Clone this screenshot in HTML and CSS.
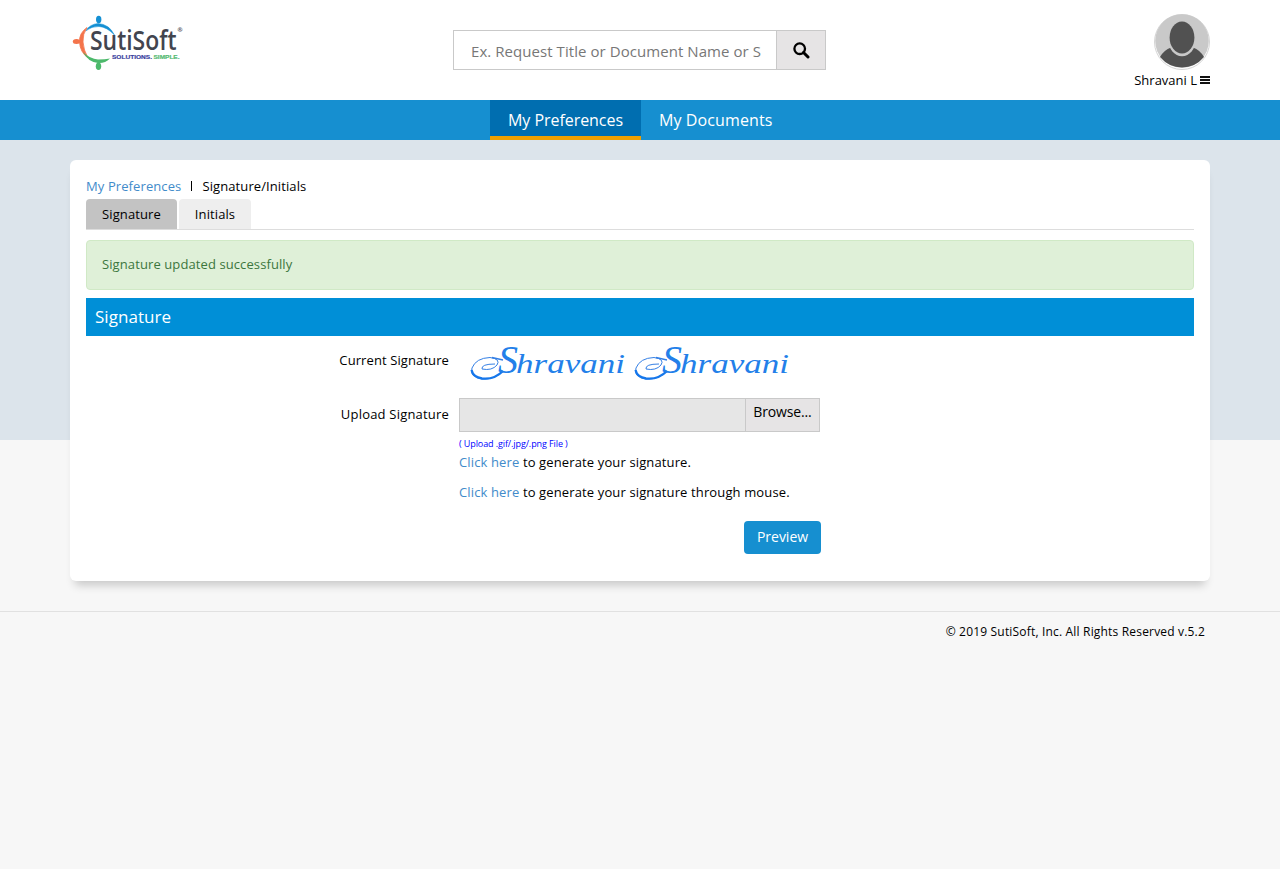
FILE: index.html
```html
<!DOCTYPE html>
<html lang="en">
<head>
<meta charset="utf-8">
<title>My Preferences - Signature</title>
<link rel="stylesheet" href="styles.css">
</head>
<body>
<header class="header container">
  <svg class="logo" viewBox="0 0 112 58" role="img" aria-label="SutiSoft">
    <ellipse cx="25.700" cy="5.500" rx="2.700" ry="3.700" fill="#1490d4"/>
    <path d="M12.500 17 Q17 10 25 9.500 Q36 10 41.500 21 Q34 13 26 12.500 Q19 12 12.500 17Z" fill="#1490d4" stroke="#1490d4" stroke-width=".5"/>
    <ellipse cx="3.500" cy="27.500" rx="3.700" ry="2.500" fill="#f4744b"/>
    <path d="M14 13.500 Q6 19 6.500 28 Q7 38 15 44 Q10.500 36 10 28 Q9.500 20 14 13.500Z" fill="#f4744b" stroke="#f4744b" stroke-width=".8"/>
    <ellipse cx="25.500" cy="52.200" rx="2.700" ry="3.800" fill="#4cb96b"/>
    <path d="M10 38 Q17 45 25 45.500 Q32 45.500 37 44.500 Q32 49.500 25 49 Q15 48 10 38Z" fill="#4cb96b"/>
    <text class="logo-name" x="17" y="35.500" textLength="86.500" lengthAdjust="spacingAndGlyphs">SutiSoft</text>
    <text class="logo-reg" x="104.500" y="17.500">®</text>
    <text class="logo-tag" x="39" y="44.500" fill="#3a3f9e" stroke="#3a3f9e" textLength="40" lengthAdjust="spacingAndGlyphs">SOLUTIONS.</text>
    <text class="logo-tag" x="80.500" y="44.500" fill="#55ba72" stroke="#55ba72" textLength="26" lengthAdjust="spacingAndGlyphs">SIMPLE.</text>
  </svg>
  <form class="search">
    <input class="search-input" type="text" aria-label="Search" placeholder="Ex. Request Title or Document Name or S">
    <button class="search-button" type="button" aria-label="Search">
      <svg width="17" height="17" viewBox="0 0 17 17"><circle cx="6.700" cy="6.700" r="5.300" fill="none" stroke="#000" stroke-width="2.300"/><path d="M10.500 10.500 15 15" stroke="#000" stroke-width="3" stroke-linecap="round"/></svg>
    </button>
  </form>
  <div class="user">
    <svg class="avatar" viewBox="0 0 56 56">
      <circle cx="28" cy="28" r="27.500" fill="#fff" stroke="#d4d4d4"/>
      <circle cx="28" cy="27" r="26.800" fill="#c9c9c9"/>
      <path d="M6 43 Q10 36 17 33.500 Q28 50 39 33.500 Q46 36 50 43 Q41 53.500 28 53.500 Q15 53.500 6 43Z" fill="#515151"/>
      <ellipse cx="28" cy="25" rx="13.800" ry="17.300" fill="#c9c9c9"/>
      <ellipse cx="28" cy="23.500" rx="12.400" ry="16" fill="#515151"/>
    </svg>
    <div class="user-name"><span>Shravani L</span><svg width="10" height="8" viewBox="0 0 10 8"><path d="M0 1h10M0 4h10M0 7h10" stroke="#111" stroke-width="2"/></svg></div>
  </div>
</header>
<nav class="nav">
  <a class="nav-item active">My Preferences</a>
  <a class="nav-item docs">My Documents</a>
</nav>
<div class="page">
  <main class="card">
    <div class="breadcrumb"><a class="crumb-link">My Preferences</a><span class="crumb-bar"></span><span class="crumb-current">Signature/Initials</span></div>
    <div class="tabs"><a class="tab tab-sig active"><span>Signature</span></a><a class="tab tab-ini"><span>Initials</span></a></div>
    <div class="alert"><span>Signature updated successfully</span></div>
    <h2 class="title"><span>Signature</span></h2>
    <div class="row row-current">
      <div class="label">Current Signature</div>
      <svg class="signature" viewBox="0 0 324 40">
        <defs>
          <g id="flourish">
            <path d="M36 27 Q27 36 15 35 Q2 33 5 24 Q9 14 23 13.500 Q34 15 30 21 Q25 27 15 25 Q14 20 28 20"/>
            <path class="heavy" d="M36 27 Q27 36 15 34.500 Q6 33 4.500 26"/>
            <path class="mid" d="M25 13.500 L36 16"/>
          </g>
        </defs>
        <use href="#flourish"/>
        <text x="31" y="29"><tspan class="sig-cap">S</tspan><tspan x="49" textLength="109" lengthAdjust="spacingAndGlyphs">hravani</tspan></text>
        <use href="#flourish" x="164"/>
        <text x="195" y="29"><tspan class="sig-cap">S</tspan><tspan x="213" textLength="109" lengthAdjust="spacingAndGlyphs">hravani</tspan></text>
      </svg>
    </div>
    <div class="row row-upload">
      <div class="label upload-label">Upload Signature</div>
      <div class="file"><div class="file-name"></div><button class="browse" type="button">Browse...</button></div>
    </div>
    <div class="help">
      <div class="hint">( Upload .gif/.jpg/.png File )</div>
      <p class="help-line"><a>Click here</a> to generate your signature.</p>
      <p class="help-line mouse"><a>Click here</a> to generate your signature through mouse.</p>
    </div>
    <button class="preview" type="button">Preview</button>
  </main>
</div>
<footer class="footer"><div class="container copyright">© 2019 SutiSoft, Inc. All Rights Reserved v.5.2</div></footer>
</body>
</html>
```
FILE: styles.css
```css
* { box-sizing: border-box; }
body { margin: 0; background: #f7f7f7; color: #000; font: 13px/20px "Open Sans", "Noto Sans", sans-serif; min-height: 869px; white-space: nowrap; letter-spacing: .1px; }
button, input { font: inherit; color: inherit; margin: 0; border-radius: 0; letter-spacing: 0; }
.container { width: 1140px; margin: 0 auto; }
.header { height: 100px; display: grid; grid-template-columns: 383px 373px 384px; box-shadow: 0 0 0 100vmax #fff; clip-path: inset(0 -100vmax); background: #fff; }
.logo { width: 112px; height: 58px; margin: 14px 0 0 3px; letter-spacing: 0; overflow: visible; }
.logo-name { font: 600 27px "Open Sans", sans-serif; fill: #42454f; }
.logo-reg { font: 700 6px "Open Sans", sans-serif; fill: #42454f; }
.logo-tag { font: 700 6px "Liberation Sans", sans-serif; stroke-width: .2; }
.search { display: flex; height: 40px; margin: 30px 0 0; border: 1px solid #c9c9c9; }
.search-input { width: 322px; padding: 1px 14px 0 17px; border: 0; background: #fff; font-size: 15px; letter-spacing: .06px; outline: 0; }
.search-input::placeholder { color: #777; opacity: 1; }
.search-button { flex: 1; display: flex; align-items: center; justify-content: center; border: 0; border-left: 1px solid #c9c9c9; background: #e6e4e5; padding: 0; }
.user { display: flex; flex-direction: column; align-items: flex-end; padding-top: 14px; }
.avatar { width: 56px; height: 56px; }
.user-name { display: flex; align-items: center; gap: 3px; letter-spacing: 0; }
.nav { height: 40px; display: flex; background: #168fd0; padding-left: 490px; }
.nav-item { padding: 0 18px; line-height: 40px; color: #fff; font-size: 16px; letter-spacing: -.05px; }
.nav-item.docs { letter-spacing: .1px; }
.nav-item.active { width: 151px; background: #006eb0; border-bottom: 4px solid #f0a000; }
.page { padding-top: 20px; background: linear-gradient(#dce4eb, #dce4eb) 0 0 / 100% 300px no-repeat; }
.card { width: 1140px; height: 421px; margin: 0 auto; padding: 16px; background: #fff; border-radius: 6px; box-shadow: 0 9px 10px -5px rgba(0,0,0,.2); }
.breadcrumb { height: 23px; display: flex; align-items: center; padding-bottom: 3px; }
.crumb-link, .help-line a { color: #428bca; }
.crumb-bar { width: 1px; height: 10px; margin: 0 10px; background: #000; }
.tabs { height: 31px; display: flex; gap: 2px; border-bottom: 1px solid #ddd; }
.tab { height: 30px; line-height: 30px; text-align: center; background: #eee; border-radius: 4px 4px 0 0; }
.tab-sig { width: 91px; }
.tab-ini { width: 72px; }
.tab.active { background: #c3c3c3; }
.alert { height: 50px; margin-top: 10px; padding: 13px 15px; background: #dff0d8; border: 1px solid #d0e9c6; border-radius: 4px; color: #3c763d; }
.title { height: 38px; margin: 8px 0 0; padding: 0 9px; background: #008fd7; color: #fff; font-size: 17px; font-weight: 400; line-height: 38px; letter-spacing: .05px; }
.row { display: grid; grid-template-columns: 363px 1fr; column-gap: 10px; }
.row-current { height: 62px; }
.label { text-align: right; line-height: 20px; padding-top: 14px; }
.upload-label { padding-top: 6px; letter-spacing: .2px; }
.signature { width: 324px; height: 40px; margin: 8px 0 0 8px; overflow: visible; letter-spacing: 0; }
.signature text { font: italic 27px "Liberation Serif", serif; fill: #237fe9; }
.signature .sig-cap { font-size: 40px; }
.signature path { fill: none; stroke: #347fe5; stroke-width: 1; }
.signature .heavy { stroke-width: 2.300; stroke: #1677eb; }
.signature .mid { stroke-width: 1.300; }
.file { width: 361px; height: 34px; display: flex; border: 1px solid #c9c9c9; background: #e6e6e6; }
.file-name { width: 285px; }
.browse { flex: 1; border: 0; border-left: 1px solid #c9c9c9; padding: 0 0 6px; background: #e6e4e5; font-size: 14px; letter-spacing: -.15px; }
.help { padding-left: 373px; }
.hint { height: 20px; padding-top: 2px; color: #00f; font-size: 9px; letter-spacing: -.1px; }
.help-line { margin: 0; letter-spacing: .13px; }
.mouse { margin-top: 10px; }
.preview { display: block; width: 77px; height: 33px; margin: 19px 0 0 658px; padding: 0 0 2px; background: #168fd0; border: 0; border-radius: 4px; color: #fff; font-size: 14px; }
.footer { margin-top: 30px; border-top: 1px solid #e1e1e1; padding-top: 10px; }
.copyright { text-align: right; padding-right: 5px; font-size: 12px; letter-spacing: .18px; }
```
